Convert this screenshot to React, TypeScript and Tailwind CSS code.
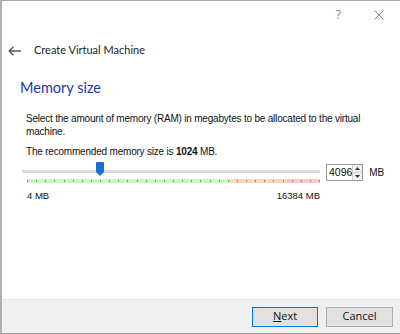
import React from "react";

const ticks = Array.from({ length: 33 });

function SpinArrows() {
  return (
    <div className="flex flex-col w-[10px] h-full border-l border-[#cfcfcf]">
      <div className="flex-1 flex items-center justify-center bg-[#f0f0f0] border-b border-[#cfcfcf]">
        <svg width="5" height="3" viewBox="0 0 5 3">
          <path d="M0 3 L2.5 0 L5 3 Z" fill="#333" />
        </svg>
      </div>
      <div className="flex-1 flex items-center justify-center bg-[#f0f0f0]">
        <svg width="5" height="3" viewBox="0 0 5 3">
          <path d="M0 0 L2.5 3 L5 0 Z" fill="#333" />
        </svg>
      </div>
    </div>
  );
}

export default function App() {
  return (
    <div className="w-[400px] h-[334px] bg-white flex flex-col border-t border-[#a6a6a6] border-l-2 border-l-[#b0b0b0] relative overflow-hidden">
      <div className="absolute left-[-2px] top-[39px] w-[2px] h-[52px] bg-[#2a8ae0]" />
      <div className="absolute left-[130px] top-[-1px] w-[24px] h-[1px] bg-[#e8c890]" />
      <div className="absolute left-[218px] top-[-1px] w-[12px] h-[1px] bg-[#9cd08c]" />

      {/* caption buttons */}
      <div className="h-[28px] flex items-center justify-end pr-[16px] gap-[33px] text-[#888]" style={{ fontFamily: "'Open Sans', sans-serif" }}>
        <span className="text-[12px] leading-none">?</span>
        <svg width="10" height="10" viewBox="0 0 10 10">
          <path d="M0.5 0.5 L9.5 9.5 M9.5 0.5 L0.5 9.5" stroke="#888" strokeWidth="1" />
        </svg>
      </div>

      {/* header */}
      <div className="h-[42px] flex items-center pl-[6px] pt-[1px]" style={{ fontFamily: "Lato, sans-serif" }}>
        <svg width="14" height="10" viewBox="0 0 14 10" className="mr-[12px]">
          <path d="M1 5 H13 M1 5 L5.5 0.8 M1 5 L5.5 9.2" stroke="#555" strokeWidth="1.3" fill="none" />
        </svg>
        <span className="text-[11px] text-[#222]">Create Virtual Machine</span>
      </div>

      <div className="pl-[18px] h-[34px] flex items-center text-[14.5px] text-[#1c38b0]" style={{ fontFamily: "Lato, sans-serif" }}>
        Memory size
      </div>

      <div className="pl-[24px] pr-[20px] pt-[7px] text-[10px] leading-[13px] tracking-[-0.2px] text-[#111]" style={{ fontFamily: "'Liberation Sans', sans-serif" }}>
        <p>Select the amount of memory (RAM) in megabytes to be allocated to the virtual machine.</p>
        <p className="mt-[7px]">
          The recommended memory size is <b>1024</b> MB.
        </p>

        <div className="flex mt-[4px]">
          <div className="w-[303px] ml-[-4px]">
            <div className="relative h-[16px] flex items-center pt-[2px]">
              <div className="w-full h-[3px] bg-[#e2e2e2] border-y border-[#d4d4d4]" />
              <svg className="absolute left-[74px] top-[0px]" width="8" height="14" viewBox="0 0 8 14">
                <path d="M1 0 H7 Q8 0 8 1 V10 L4 14 L0 10 V1 Q0 0 1 0 Z" fill="#1470d6" />
              </svg>
            </div>
            <div className="ml-[5px] w-[293px] h-[4px] mt-[1px] flex">
              <div className="w-[202px] bg-[#c6f7c6]" />
              <div className="w-[58px] bg-[#fdd3c2]" />
              <div className="flex-1 bg-[#fdc4c4]" />
            </div>
            <div className="ml-[5px] w-[293px] mt-[-4px] h-[4px] flex justify-between items-center">
              {ticks.map((_, i) => (
                <div key={i} className="w-[1px] h-[2px] bg-[#8a8a8a]" />
              ))}
            </div>
            <div className="flex justify-between pl-[5px] pr-0 mt-[6px] text-[9.5px] tracking-normal">
              <span>4 MB</span>
              <span>16384 MB</span>
            </div>
          </div>
          <div className="ml-[6px] mt-[2px] w-[44px] h-[17px] border border-[#9a9a9a] flex bg-white">
            <div className="flex-1 pl-[2px] flex items-center text-[10.5px] tracking-normal">4096</div>
            <SpinArrows />
          </div>
          <div className="ml-[6px] mt-[2px] h-[17px] flex items-center text-[10px]">MB</div>
        </div>
      </div>

      <div className="mt-auto h-[35px] bg-[#f0f0f0] border-t border-[#e3e3e3] border-b border-b-[#a0a0a0] flex items-center justify-end gap-[8px] pr-[7px] text-[11px] text-[#111]" style={{ fontFamily: "'Open Sans', sans-serif" }}>
        <button className="w-[66px] h-[20px] bg-[#e1e1e1] border border-[#0078d7] flex items-center justify-center">
          <span><span className="underline">N</span>ext</span>
        </button>
        <button className="w-[67px] h-[20px] bg-[#e1e1e1] border border-[#adadad] flex items-center justify-center">
          Cancel
        </button>
      </div>
    </div>
  );
}
